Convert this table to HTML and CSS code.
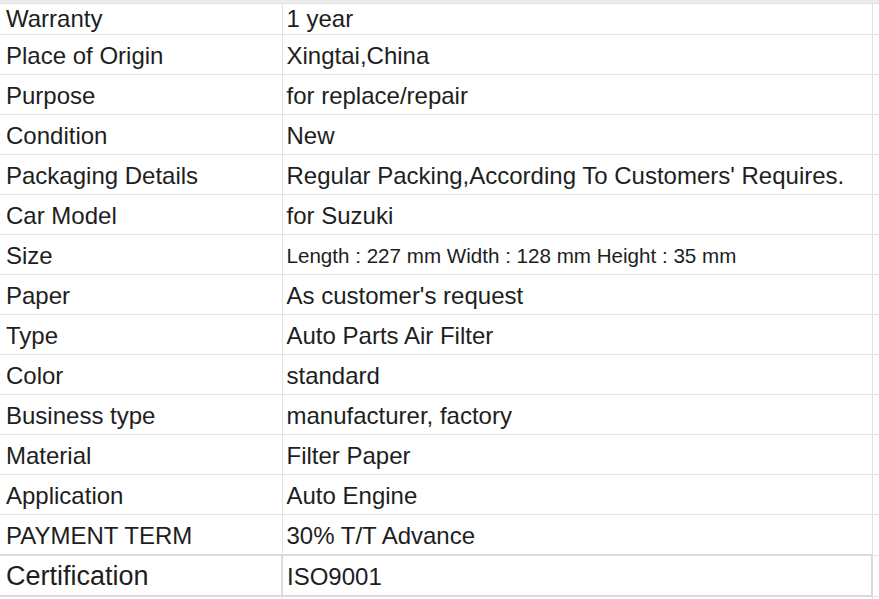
FILE: index.html
```html
<!DOCTYPE html>
<html lang="en">
<head>
<meta charset="utf-8">
<title>Specifications</title>
<link rel="stylesheet" href="styles.css">
</head>
<body>
<div class="sheet">
  <div class="top-band"></div>
  <table class="spec">
    <colgroup><col class="c1"><col class="c2"><col class="c3"></colgroup>
    <tbody>
      <tr class="first"><td>Warranty</td><td>1 year</td><td></td></tr>
      <tr><td>Place of Origin</td><td>Xingtai,China</td><td></td></tr>
      <tr><td>Purpose</td><td>for replace/repair</td><td></td></tr>
      <tr><td>Condition</td><td>New</td><td></td></tr>
      <tr><td>Packaging Details</td><td>Regular Packing,According To Customers' Requires.</td><td></td></tr>
      <tr><td>Car Model</td><td>for Suzuki</td><td></td></tr>
      <tr><td>Size</td><td class="small">Length : 227 mm Width : 128 mm Height : 35 mm</td><td></td></tr>
      <tr><td>Paper</td><td>As customer's request</td><td></td></tr>
      <tr><td>Type</td><td>Auto Parts Air Filter</td><td></td></tr>
      <tr><td>Color</td><td>standard</td><td></td></tr>
      <tr><td>Business type</td><td>manufacturer, factory</td><td></td></tr>
      <tr><td>Material</td><td>Filter Paper</td><td></td></tr>
      <tr><td>Application</td><td>Auto Engine</td><td></td></tr>
      <tr><td>PAYMENT TERM</td><td>30% T/T Advance</td><td></td></tr>
      <tr class="cert"><td class="big">Certification</td><td>ISO9001</td><td class="plain"></td></tr>
      <tr><td></td><td></td><td></td></tr>
    </tbody>
  </table>
</div>
</body>
</html>
```

FILE: styles.css
```css
html, body {
  margin: 0;
  padding: 0;
  background: #ffffff;
  overflow: hidden;
}

.sheet {
  width: 920px;
  font-family: "Liberation Sans", Arial, sans-serif;
  color: #1e1e1e;
}

.top-band {
  height: 3px;
  background: #ececec;
}

.spec {
  border-collapse: collapse;
  table-layout: fixed;
  width: 920px;
}

.spec .c1 { width: 282px; }
.spec .c2 { width: 590px; }
.spec .c3 { width: 48px; }

.spec td {
  height: 39px;
  box-sizing: border-box;
  padding: 2px 0 0 4px;
  border: 1px solid #e2e2e2;
  font-size: 24px;
  line-height: 37px;
  vertical-align: top;
  white-space: nowrap;
  overflow: hidden;
}

.spec td:first-child {
  border-left: none;
  padding-left: 6px;
}

.spec tr.first td {
  height: 31px;
  padding-top: 3px;
  line-height: 24px;
}

.spec td.small {
  font-size: 20.6px;
}

.spec tr.cert td {
  border: 2px solid #dadada;
}

.spec tr.cert td:first-child {
  border-left: none;
}

.spec tr.cert td.plain {
  border: 1px solid #e2e2e2;
}

.spec td.big {
  font-size: 27px;
}
```
